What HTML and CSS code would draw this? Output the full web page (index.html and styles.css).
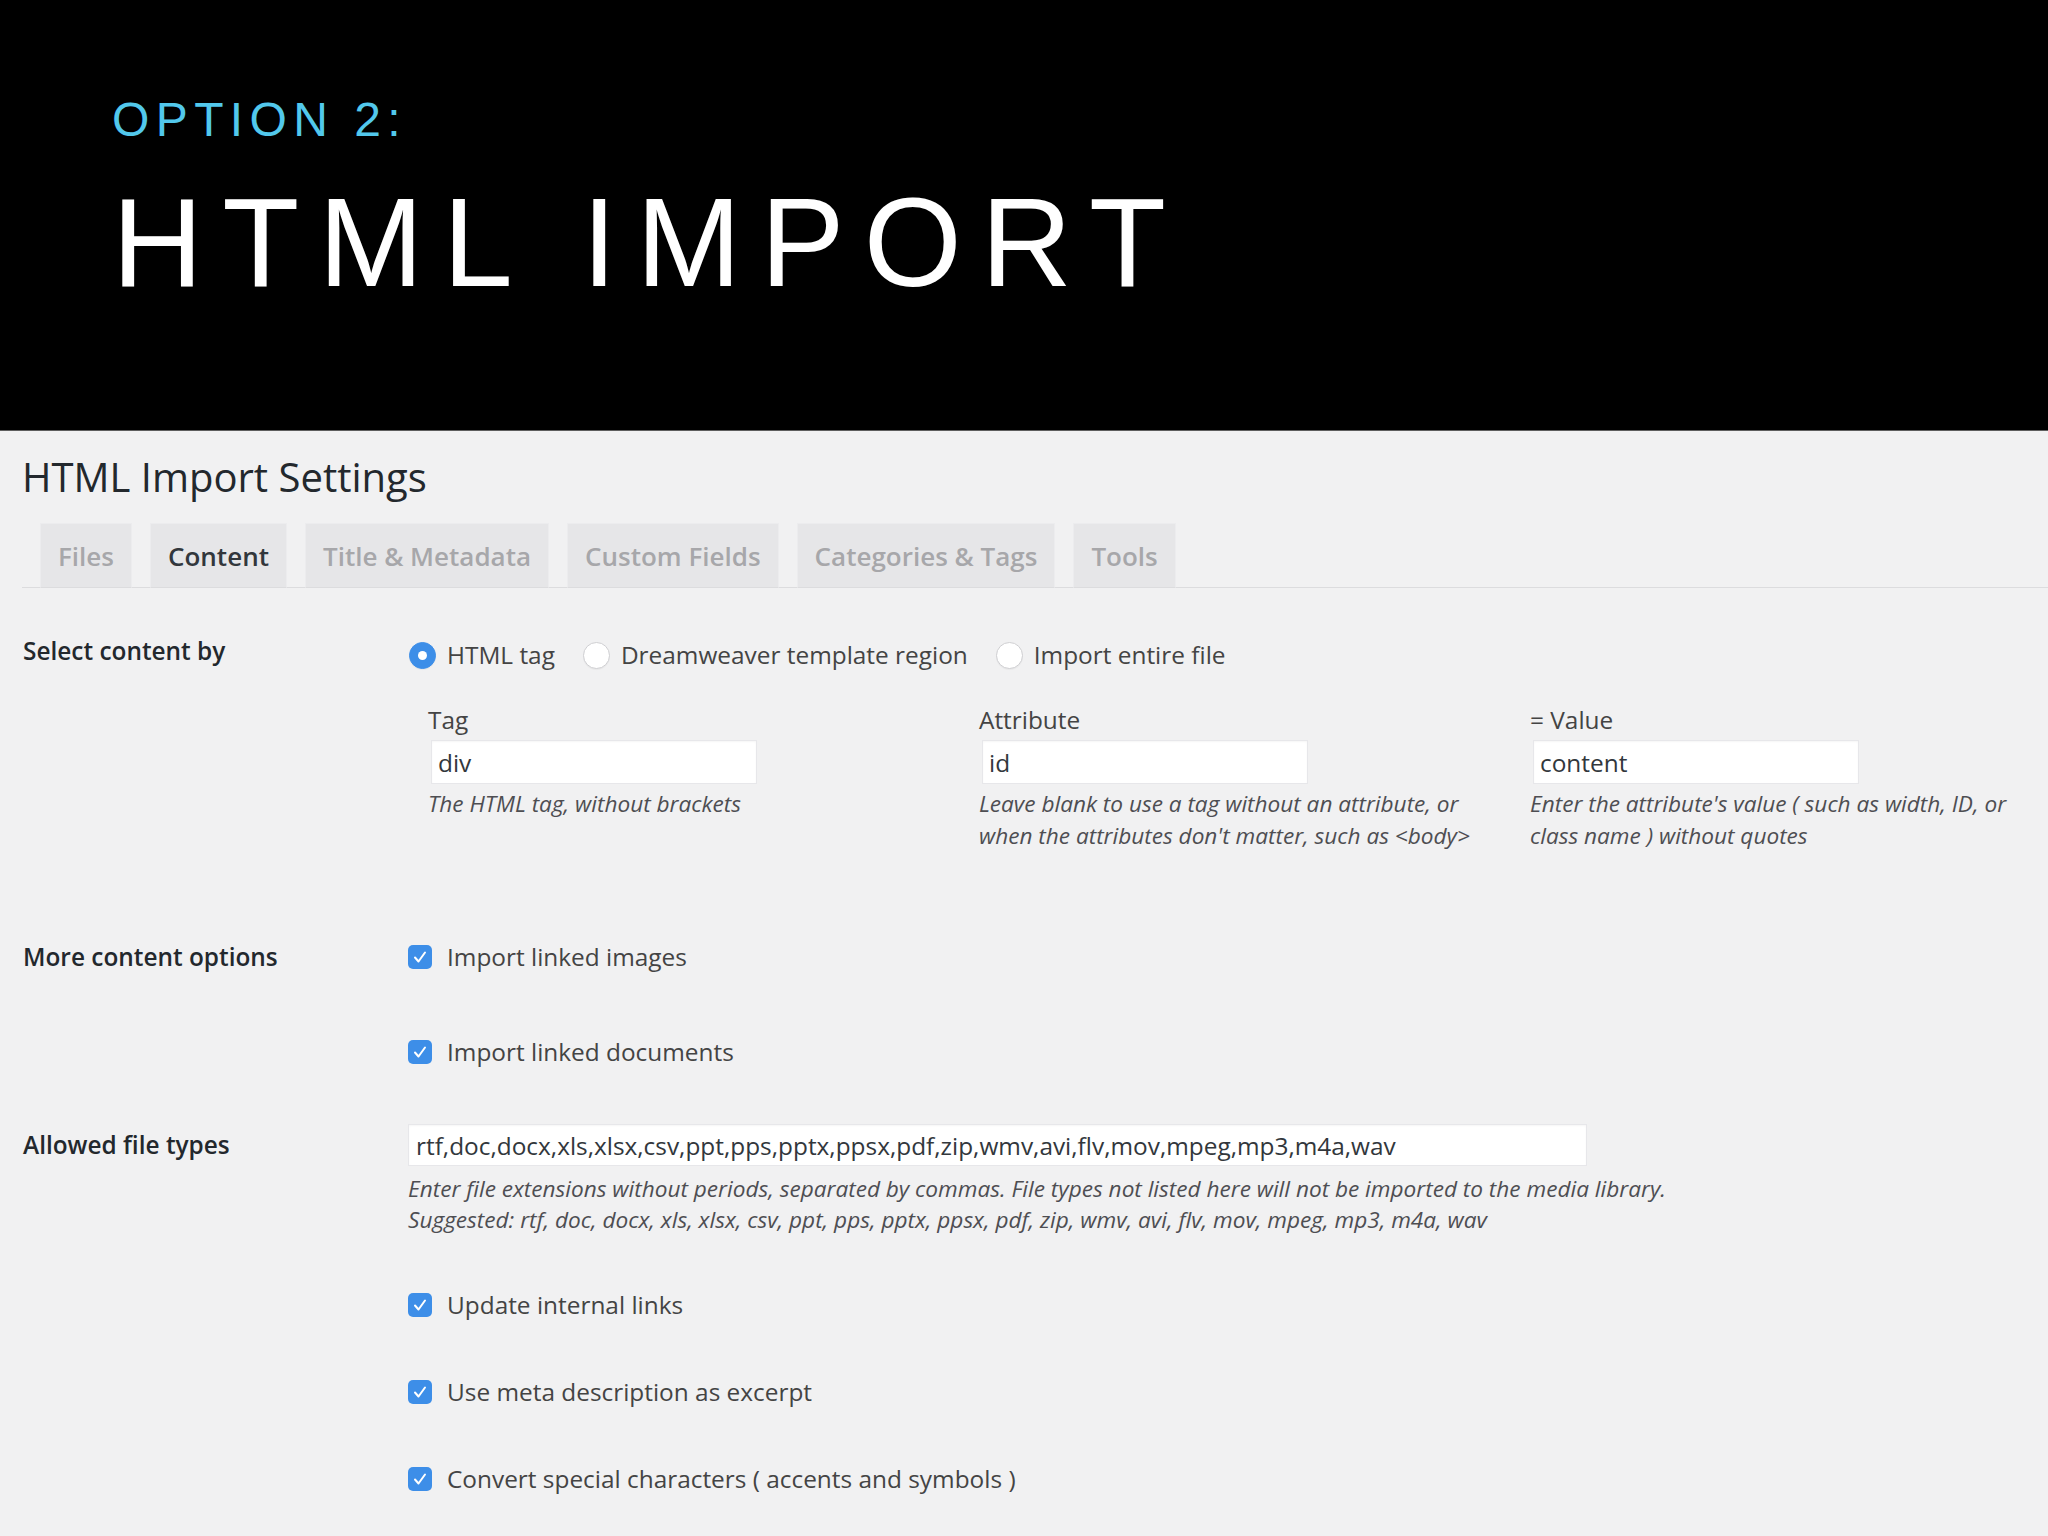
FILE: index.html
```html
<!DOCTYPE html>
<html lang="en">
<head>
<meta charset="utf-8">
<title>HTML Import</title>
<link rel="stylesheet" href="styles.css">
</head>
<body>
<header class="hero">
  <div class="kicker">OPTION 2:</div>
  <h1 class="headline">HTML IMPORT</h1>
</header>
<main class="panel">
  <h2 class="page-title">HTML Import Settings</h2>
  <nav class="tabs">
    <span class="tab">Files</span>
    <span class="tab tab-active">Content</span>
    <span class="tab">Title &amp; Metadata</span>
    <span class="tab">Custom Fields</span>
    <span class="tab">Categories &amp; Tags</span>
    <span class="tab">Tools</span>
  </nav>

  <section class="row row-select">
    <div class="row-label">Select content by</div>
    <div class="row-body">
      <div class="radios">
        <span class="radio radio-on"></span><span class="opt">HTML tag</span>
        <span class="radio"></span><span class="opt">Dreamweaver template region</span>
        <span class="radio"></span><span class="opt">Import entire file</span>
      </div>
      <div class="subfields">
        <div class="field">
          <div class="field-label">Tag</div>
          <input class="text-input short" type="text" value="div" readonly>
          <p class="hint hint-cols">The HTML tag, without brackets</p>
        </div>
        <div class="field">
          <div class="field-label">Attribute</div>
          <input class="text-input short" type="text" value="id" readonly>
          <p class="hint hint-cols">Leave blank to use a tag without an attribute, or<br>when the attributes don't matter, such as &lt;body&gt;</p>
        </div>
        <div class="field">
          <div class="field-label">= Value</div>
          <input class="text-input short" type="text" value="content" readonly>
          <p class="hint hint-cols">Enter the attribute's value ( such as width, ID, or<br>class name ) without quotes</p>
        </div>
      </div>
    </div>
  </section>

  <section class="row row-more">
    <div class="row-label">More content options</div>
    <div class="row-body checks checks-wide">
      <div class="check"><span class="box"><svg viewBox="0 0 24 24" width="24" height="24"><path d="M7 12.5 L10.5 16.5 L17 7.5" fill="none" stroke="#fff" stroke-width="2" stroke-linecap="round" stroke-linejoin="round"/></svg></span><span class="opt">Import linked images</span></div>
      <div class="check"><span class="box"><svg viewBox="0 0 24 24" width="24" height="24"><path d="M7 12.5 L10.5 16.5 L17 7.5" fill="none" stroke="#fff" stroke-width="2" stroke-linecap="round" stroke-linejoin="round"/></svg></span><span class="opt">Import linked documents</span></div>
    </div>
  </section>

  <section class="row row-types">
    <div class="row-label row-label-types">Allowed file types</div>
    <div class="row-body">
      <input class="text-input long" type="text" value="rtf,doc,docx,xls,xlsx,csv,ppt,pps,pptx,ppsx,pdf,zip,wmv,avi,flv,mov,mpeg,mp3,m4a,wav" readonly>
      <p class="hint hint-types">Enter file extensions without periods, separated by commas. File types not listed here will not be imported to the media library.<br>Suggested: rtf, doc, docx, xls, xlsx, csv, ppt, pps, pptx, ppsx, pdf, zip, wmv, avi, flv, mov, mpeg, mp3, m4a, wav</p>
    </div>
  </section>

  <section class="row row-extra">
    <div class="row-label"></div>
    <div class="row-body checks checks-tight">
      <div class="check"><span class="box"><svg viewBox="0 0 24 24" width="24" height="24"><path d="M7 12.5 L10.5 16.5 L17 7.5" fill="none" stroke="#fff" stroke-width="2" stroke-linecap="round" stroke-linejoin="round"/></svg></span><span class="opt">Update internal links</span></div>
      <div class="check"><span class="box"><svg viewBox="0 0 24 24" width="24" height="24"><path d="M7 12.5 L10.5 16.5 L17 7.5" fill="none" stroke="#fff" stroke-width="2" stroke-linecap="round" stroke-linejoin="round"/></svg></span><span class="opt">Use meta description as excerpt</span></div>
      <div class="check"><span class="box"><svg viewBox="0 0 24 24" width="24" height="24"><path d="M7 12.5 L10.5 16.5 L17 7.5" fill="none" stroke="#fff" stroke-width="2" stroke-linecap="round" stroke-linejoin="round"/></svg></span><span class="opt">Convert special characters ( accents and symbols )</span></div>
    </div>
  </section>
</main>
</body>
</html>
```

FILE: styles.css
```css
html, body {
  margin: 0;
  padding: 0;
}
body {
  width: 2048px;
  height: 1536px;
  overflow: hidden;
  background: #f1f1f2;
  font-family: "Open Sans", "Noto Sans", sans-serif;
}

/* Slide header */
.hero {
  box-sizing: border-box;
  height: 431px;
  background: #000;
  border-bottom: 1px solid #5e5e5e;
  padding: 92px 0 0 112px;
  font-family: "Liberation Sans", Arial, sans-serif;
}
.kicker {
  font-size: 48px;
  line-height: 56px;
  letter-spacing: 6.4px;
  color: #52c8ec;
}
.headline {
  margin: 25px 0 0;
  font-size: 126px;
  line-height: 140px;
  font-weight: normal;
  letter-spacing: 19.3px;
  color: #fff;
}

/* Settings panel */
.panel {
  padding: 0 0 0 22px;
}
.page-title {
  margin: 19px 0 0;
  font-size: 40px;
  line-height: 54px;
  font-weight: normal;
  color: #23282d;
}
.tabs {
  display: flex;
  margin-top: 19px;
  border-bottom: 1px solid #dcdcde;
}
.tab {
  box-sizing: border-box;
  height: 65px;
  margin: 0 0 -1px 18px;
  padding: 11px 17px 0;
  line-height: 42px;
  font-size: 26px;
  font-weight: 600;
  color: #a7a7aa;
  background: #e6e6e8;
  border: 1px solid #ececee;
  border-bottom-color: #dcdcde;
}
.tab-active {
  color: #32373c;
}

.row {
  display: grid;
  grid-template-columns: 386px 1fr;
}
.row-label {
  padding-left: 1px;
  font-size: 24.4px;
  line-height: 34px;
  font-weight: 600;
  color: #23282d;
}
.row-body {
  font-size: 24.4px;
  line-height: 34px;
  color: #444;
}

.row-select {
  padding-top: 46px;
}
.row-select .row-body {
  padding-top: 4px;
}
.radios {
  display: flex;
  align-items: center;
  height: 34px;
}
.radio {
  box-sizing: border-box;
  width: 27px;
  height: 27px;
  margin-left: 1px;
  border-radius: 50%;
  background: #fff;
  border: 1px solid #cfcfd2;
  box-shadow: 0 1px 1px rgba(0,0,0,0.04);
  flex: none;
}
.radio-on {
  background: #3d8ee8;
  border-color: #3d8ee8;
  display: flex;
  align-items: center;
  justify-content: center;
}
.radio-on::after {
  content: "";
  width: 9px;
  height: 9px;
  border-radius: 50%;
  background: #fff;
}
.radios .opt {
  margin-left: 11px;
  margin-right: 27px;
}

.subfields {
  display: grid;
  grid-template-columns: repeat(3, 521px);
  column-gap: 30px;
  margin: 31px 0 0 20px;
}
.field-label {
  font-size: 24.4px;
  line-height: 34px;
  color: #444;
}
.text-input {
  display: block;
  box-sizing: border-box;
  margin: 0;
  background: #fff;
  border: 1px solid #e7e7ea;
  border-radius: 0;
  box-shadow: inset 0 1px 2px rgba(0,0,0,0.04);
  font-family: "Open Sans", "Noto Sans", sans-serif;
  font-size: 24.4px;
  color: #32373c;
  outline: none;
}
.short {
  width: 326px;
  height: 44px;
  margin: 3px 0 0 3px;
  padding: 0 6px;
}
.long {
  width: 1179px;
  height: 42px;
  padding: 0 7px;
}
.hint {
  margin: 3px 0 0;
  font-size: 22.6px;
  line-height: 31px;
  font-style: italic;
  color: #4e4e52;
}
.hint-cols {
  margin-top: 4px;
  line-height: 32px;
}
.hint-types {
  margin-top: 7px;
}

.checks {
  display: flex;
  flex-direction: column;
}
.checks-wide {
  gap: 61px;
}
.checks-tight {
  gap: 53px;
}
.check {
  display: flex;
  align-items: center;
  height: 34px;
}
.box {
  display: flex;
  width: 24px;
  height: 24px;
  border-radius: 5px;
  background: #3d8ee8;
  flex: none;
}
.check .opt {
  margin-left: 15px;
}

.row-more {
  padding-top: 88px;
}
.row-types {
  padding-top: 55px;
}
.row-label-types {
  padding-top: 4px;
}
.row-extra {
  padding-top: 53px;
}
```
